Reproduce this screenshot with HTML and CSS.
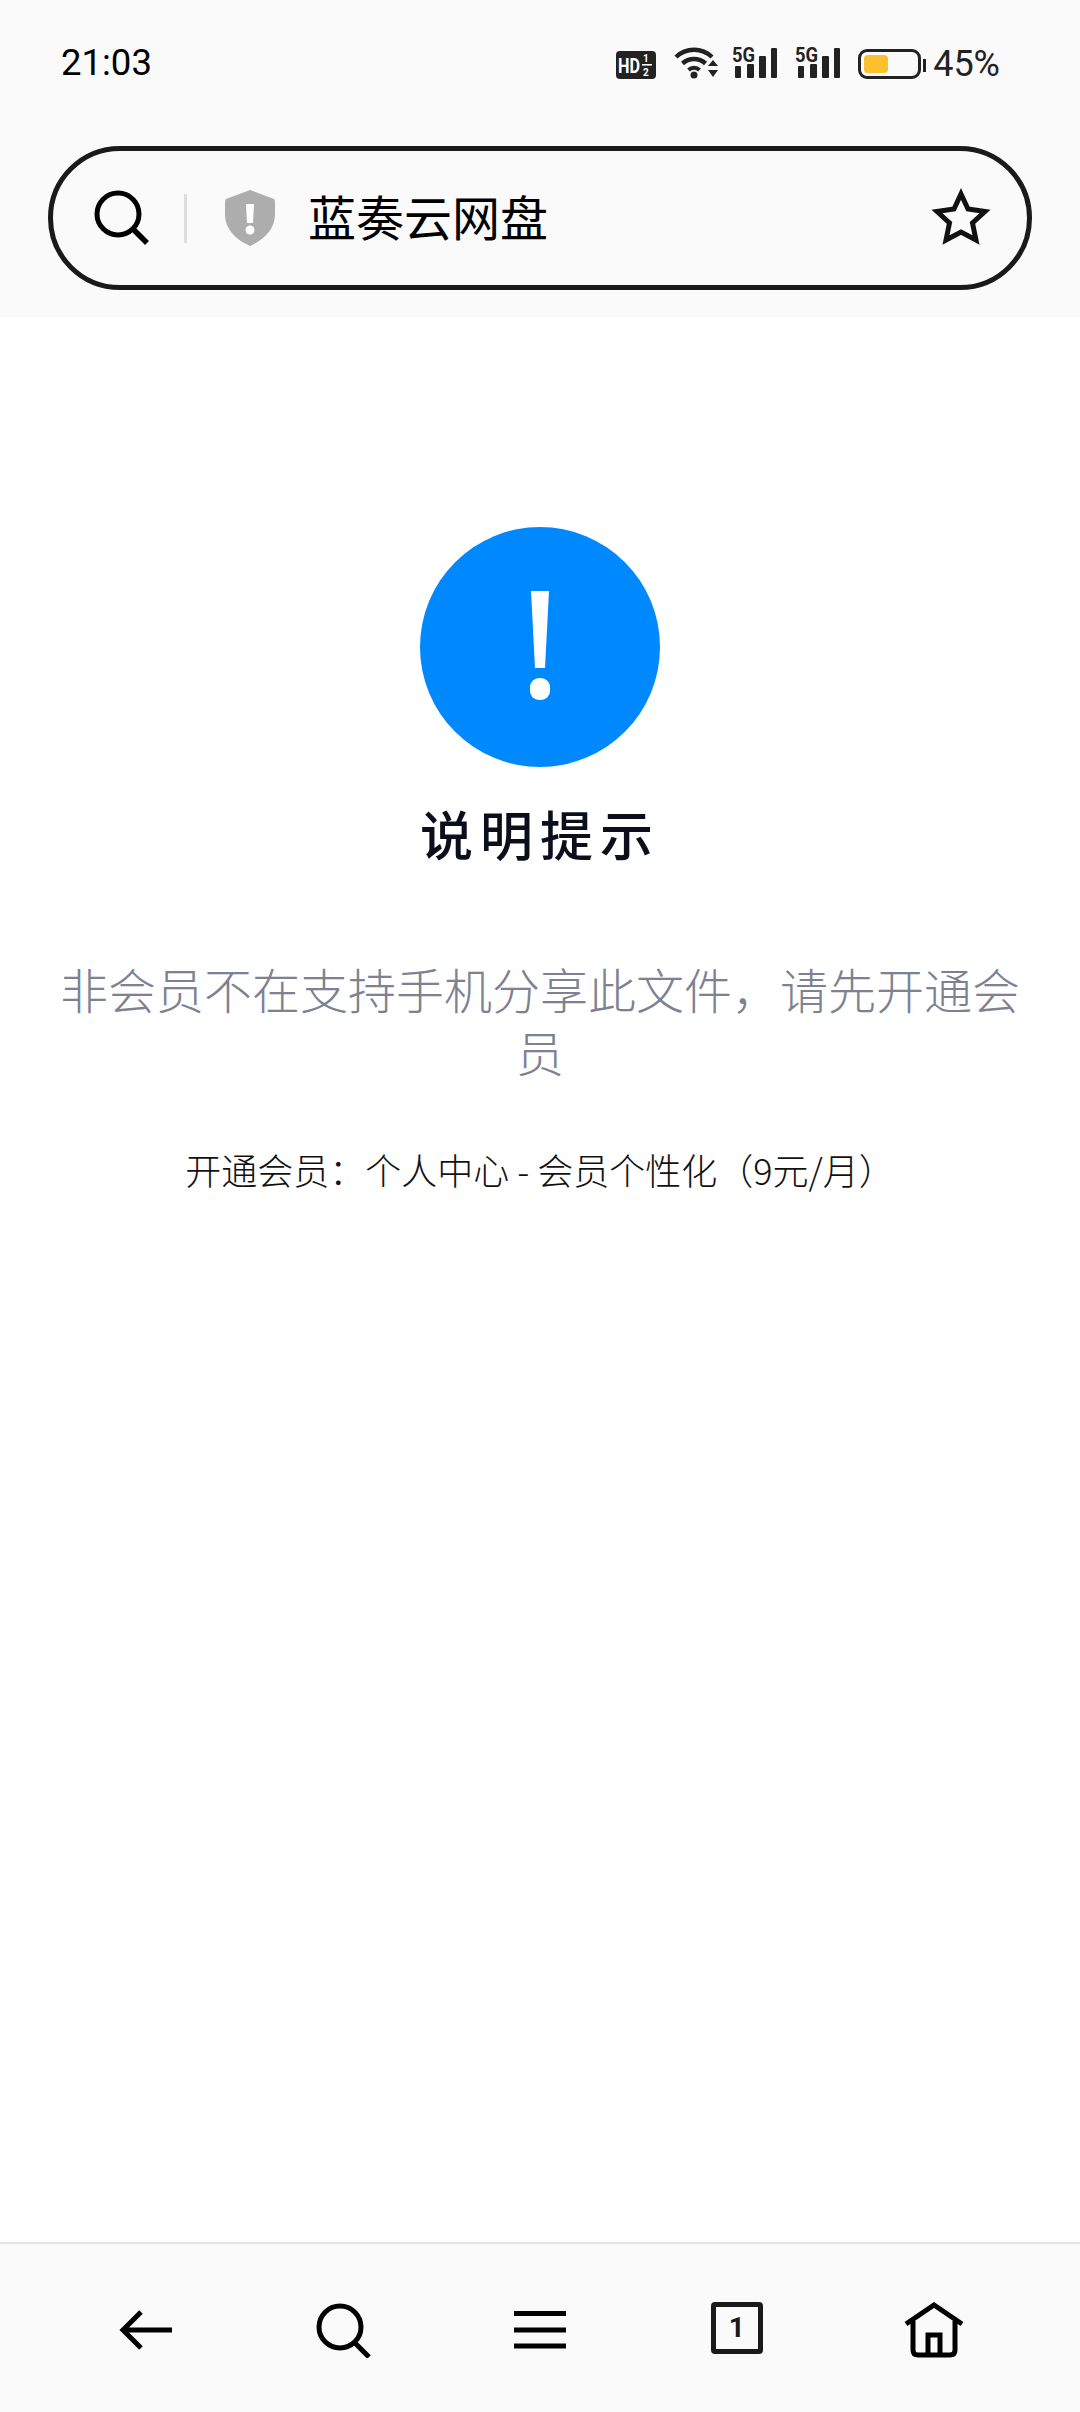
FILE: index.html
```html
<!DOCTYPE html>
<html>
<head>
	<meta charset="utf-8">
	<title>说明提示</title>
	<link rel="stylesheet" href="styles.css">
</head>
<body>
	<div id="page">
		<div class="top">
			<div class="status">
				<span class="time">21:03</span>
				<div class="status-icons">
					<svg class="ic-hd" width="40" height="28" viewBox="0 0 40 28">
						<rect width="40" height="28" rx="4" fill="#222"/>
						<text x="2" y="22" font-size="21" font-weight="700" fill="#fff" textLength="22" lengthAdjust="spacingAndGlyphs">HD</text>
						<text x="27" y="11" font-size="10" font-weight="700" fill="#fff">1</text>
						<rect x="26" y="13" width="10" height="1.6" fill="#fff"/>
						<text x="27" y="25" font-size="10" font-weight="700" fill="#fff">2</text>
					</svg>
					<svg class="ic-wifi" width="44" height="34" viewBox="0 0 44 34">
						<g fill="none" stroke="#222" stroke-width="4.5">
							<path d="M2 12 A26 26 0 0 1 38 12"/>
							<path d="M8.500 18.500 A17 17 0 0 1 31.500 18.500"/>
						</g>
						<path d="M14.500 25 A8 8 0 0 1 25.500 25" fill="none" stroke="#222" stroke-width="4"/>
						<circle cx="20" cy="30" r="3.500" fill="#222"/>
						<path d="M34 21 L44 21 L39 15 Z M34 25 L44 25 L39 32 Z" fill="#222"/>
					</svg>
					<svg class="ic-sig" width="46" height="40" viewBox="0 -6 46 40">
						<text x="0" y="17" font-size="20" font-weight="700" fill="#222" textLength="23" lengthAdjust="spacingAndGlyphs">5G</text>
						<rect x="3" y="21" width="6" height="12" rx="1" fill="#222"/>
						<rect x="15" y="19" width="7" height="14" rx="1" fill="#222"/>
						<rect x="27" y="11" width="7" height="22" rx="1" fill="#222"/>
						<rect x="39" y="3" width="6" height="30" rx="1" fill="#222"/>
					</svg>
					<svg class="ic-sig" width="46" height="40" viewBox="0 -6 46 40">
						<text x="0" y="17" font-size="20" font-weight="700" fill="#222" textLength="23" lengthAdjust="spacingAndGlyphs">5G</text>
						<rect x="3" y="21" width="6" height="12" rx="1" fill="#222"/>
						<rect x="15" y="19" width="7" height="14" rx="1" fill="#222"/>
						<rect x="27" y="11" width="7" height="22" rx="1" fill="#222"/>
						<rect x="39" y="3" width="6" height="30" rx="1" fill="#222"/>
					</svg>
					<div class="battery">
						<div class="battery-fill"></div>
						<div class="battery-tip"></div>
					</div>
					<span class="percent">45%</span>
				</div>
			</div>
			<div class="searchbar">
				<svg class="ic-search" width="56" height="56" viewBox="0 0 56 56">
					<circle cx="24" cy="24" r="21" fill="none" stroke="#000" stroke-width="5"/>
					<path d="M39 39 L53 53" stroke="#000" stroke-width="5.500"/>
				</svg>
				<i class="divider"></i>
				<svg class="ic-shield" width="50" height="56" viewBox="0 0 50 56">
					<path d="M25 0 L49 9 Q50 10 50 12 L50 24 C50 40 38 50 25 56 C12 50 0 40 0 24 L0 12 Q0 10 1 9 Z" fill="#adadad"/>
					<path d="M21 14 L29 14 L28 33 L22 33 Z" fill="#fff"/>
					<circle cx="25" cy="40" r="4.500" fill="#fff"/>
				</svg>
				<span class="site">蓝奏云网盘</span>
				<svg class="ic-star" width="60" height="58" viewBox="0 0 60 58">
					<path d="M30 6 L37 21 L54 23.500 L41.500 35 L45 52 L30 44 L15 52 L18.500 35 L6 23.500 L23 21 Z" fill="none" stroke="#111" stroke-width="5"/>
				</svg>
			</div>
		</div>
		<div class="main">
			<svg class="tip-icon" width="240" height="240" viewBox="0 0 240 240">
				<circle cx="120" cy="120" r="120" fill="#0089ff"/>
				<path d="M111 64 L129 64 L125 141 L115 141 Z" fill="#fff"/>
				<rect x="110" y="151" width="20" height="22" rx="9" fill="#fff"/>
			</svg>
			<h1 class="title">说明提示</h1>
			<p class="msg">非会员不在支持手机分享此文件，请先开通会员</p>
			<p class="sub">开通会员：个人中心 - 会员个性化（9元/月）</p>
		</div>
		<div class="nav">
			<div class="nav-item">
				<svg width="56" height="56" viewBox="0 0 56 56">
					<path d="M54 28 L5 28 M23 10 L5 28 L23 46" fill="none" stroke="#000" stroke-width="5"/>
				</svg>
			</div>
			<div class="nav-item">
				<svg width="56" height="56" viewBox="0 0 56 56">
					<circle cx="25" cy="25" r="21" fill="none" stroke="#000" stroke-width="5"/>
					<path d="M40 41 L54 55" stroke="#000" stroke-width="5"/>
				</svg>
			</div>
			<div class="nav-item">
				<svg width="56" height="56" viewBox="0 0 56 56">
					<path d="M2 11.500 H54 M2 28 H54 M2 44 H54" stroke="#000" stroke-width="5"/>
				</svg>
			</div>
			<div class="nav-item">
				<div class="tab-count">1</div>
			</div>
			<div class="nav-item">
				<svg width="60" height="56" viewBox="0 0 60 56">
					<path d="M2 22 L30 3 L58 22" fill="none" stroke="#000" stroke-width="5"/>
					<path d="M9 19 L9 48 Q9 53 14 53 L46 53 Q51 53 51 48 L51 19" fill="none" stroke="#000" stroke-width="5"/>
					<path d="M24 53 L24 33 L36 33 L36 53" fill="none" stroke="#000" stroke-width="5"/>
				</svg>
			</div>
		</div>
	</div>
</body>
</html>
```

FILE: styles.css
```css
*{margin:0;padding:0;box-sizing:border-box;}
body{
	font-family:"Noto Sans CJK SC","Noto Sans",sans-serif;
	background:#fff;
}
svg{display:block;}
svg text{font-family:"Roboto","Liberation Sans",sans-serif;}
#page{
	width:1080px;
	height:2412px;
	display:flex;
	flex-direction:column;
	overflow:hidden;
}
.top{
	height:317px;
	background:#fafafa;
	padding-top:45px;
}
.status{
	height:34px;
	display:flex;
	justify-content:space-between;
	align-items:center;
	padding:0 80px 0 61px;
}
.time{
	font-family:"Roboto",sans-serif;
	font-size:36.500px;
	color:#000;
}
.status-icons{
	display:flex;
	align-items:center;
}
.ic-hd{margin-right:18px;margin-top:5px;}
.ic-wifi{margin-right:14px;}
.ic-sig{margin:-6px 17px 0 0;}
.battery{
	width:63px;
	height:30px;
	border:3px solid #222;
	border-radius:9px;
	padding:3px;
	position:relative;
	margin:3px 12px 0 0;
	background:#fafafa;
}
.battery-fill{
	width:24px;
	height:100%;
	background:#fcc02e;
	border-radius:4px;
}
.battery-tip{
	position:absolute;
	right:-8px;
	top:7px;
	width:3px;
	height:13px;
	background:#222;
}
.percent{
	font-family:"Roboto",sans-serif;
	font-size:36px;
	color:#222;
	margin-top:3px;
}
.searchbar{
	width:984px;
	height:144px;
	margin:67px 0 0 48px;
	border:5px solid #1a1a1a;
	border-radius:72px;
	display:flex;
	align-items:center;
	padding-left:41px;
}
.divider{
	width:3px;
	height:49px;
	background:#ddd;
	margin:0 38px 0 34px;
}
.site{
	font-size:48px;
	line-height:60px;
	color:#000;
	margin:-6px 0 0 33px;
	flex:1;
}
.ic-star{margin:-2px 36px 0 0;}
.main{
	flex:1;
	display:flex;
	flex-direction:column;
	align-items:center;
	padding-top:210px;
}
.title{
	font-size:53px;
	font-weight:500;
	letter-spacing:7px;
	line-height:70px;
	color:#0b0f1c;
	margin-top:31px;
}
.msg{
	width:1000px;
	font-size:48px;
	font-weight:300;
	line-height:63px;
	color:#7d8192;
	text-align:center;
	margin-top:89px;
}
.sub{
	font-size:36px;
	font-weight:300;
	line-height:50px;
	color:#111;
	text-align:center;
	margin-top:61px;
}
.nav{
	height:170px;
	background:#fafafa;
	border-top:2px solid #e2e2e2;
	display:flex;
	padding:58px 48px 0;
}
.nav-item{
	flex:1;
	display:flex;
	justify-content:center;
}
.tab-count{
	width:52px;
	height:52px;
	border:5px solid #1a1a1a;
	border-radius:4px;
	font-family:"Roboto",sans-serif;
	font-size:28px;
	font-weight:700;
	line-height:42px;
	text-align:center;
	color:#1a1a1a;
}
```
